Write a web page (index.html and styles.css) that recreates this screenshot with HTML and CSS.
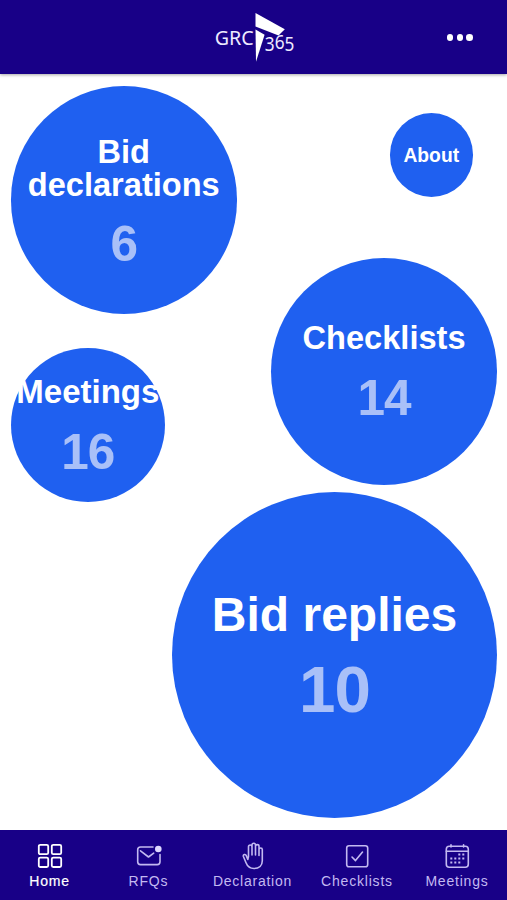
FILE: index.html
```html
<!DOCTYPE html>
<html lang="en">
<head>
<meta charset="utf-8">
<title>GRC 365</title>
<link rel="stylesheet" href="styles.css">
</head>
<body>
<header class="topbar">
  <svg class="logo" viewBox="0 0 86 56" role="img" aria-label="GRC 365">
    <path class="solid" d="M43.500 5L72.800 21.300L66.500 27.500L43.500 18.500Z"/>
    <path class="solid" d="M43.500 21.500L52.600 26.800L44 53.700Z"/>
    <text class="logo-text" x="2.800" y="37.400" font-size="20.500" textLength="39" lengthAdjust="spacingAndGlyphs">GRC</text>
    <text class="logo-text" x="52.800" y="42.600" dy="0 -1.400 1.400" font-size="19.500" textLength="29.500" lengthAdjust="spacingAndGlyphs">365</text>
  </svg>
  <button class="more" aria-label="More"><i></i><i></i><i></i></button>
</header>
<main class="canvas">
  <a class="bubble declarations"><span class="name">Bid<br>declarations</span><span class="count">6</span></a>
  <a class="bubble about"><span class="name">About</span></a>
  <a class="bubble checklists"><span class="name">Checklists</span><span class="count">14</span></a>
  <a class="bubble meetings"><span class="name">Meetings</span><span class="count">16</span></a>
  <a class="bubble replies"><span class="name">Bid replies</span><span class="count">10</span></a>
</main>
<nav class="tabs">
  <a class="tab active">
    <svg class="icon" viewBox="0 0 28 28"><rect x="2.800" y="2.800" width="9.400" height="9.400" rx="1.500"/><rect x="15.800" y="2.800" width="9.400" height="9.400" rx="1.500"/><rect x="2.800" y="15.600" width="9.400" height="9.400" rx="1.500"/><rect x="15.800" y="15.600" width="9.400" height="9.400" rx="1.500"/></svg>
    <span>Home</span>
  </a>
  <a class="tab">
    <svg class="icon" viewBox="0 0 28 28"><path d="M18 5H5.500Q2.700 5 2.700 7.800V19.800Q2.700 22.600 5.500 22.600H22.200Q25 22.600 25 19.800V12.500M5.500 8.800L13.500 15L18.700 11.200"/><circle class="solid" cx="23.300" cy="7" r="3.300"/></svg>
    <span>RFQs</span>
  </a>
  <a class="tab wide">
    <svg class="icon" viewBox="0 0 28 28"><path d="M8.800 17.500L7.300 13.600C6.500 11.700 3.800 12.500 4.400 14.500L6.900 20.500C8.500 24.700 11 26.500 15 26.500C20.200 26.500 23.300 23.500 23.300 18.800V7.600C23.300 5.400 20 5.400 20 7.600V13.500M20 8V4.300C20 2.100 16.500 2.100 16.500 4.300V13M16.500 5V3C16.500 .7 13 .7 13 3V13M13 4.800C13 2.300 9.500 2.300 9.500 4.800V14.500L8.800 17.500"/></svg>
    <span>Declaration</span>
  </a>
  <a class="tab">
    <svg class="icon" viewBox="0 0 28 28"><rect x="3.700" y="3.700" width="21" height="21" rx="2.300"/><path d="M9 15L12.500 18.600L19.500 10"/></svg>
    <span>Checklists</span>
  </a>
  <a class="tab">
    <svg class="icon" viewBox="0 0 28 28"><rect x="3.300" y="4.200" width="22" height="21" rx="3"/><path d="M3.300 9.300H25.300M8 2.800V5M20.600 2.800V5"/><path class="dots" d="M15.300 12.500h2M19.300 12.500h2M7.300 16.500h2M11.300 16.500h2M15.300 16.500h2M19.300 16.500h2M7.300 20.500h2M11.300 20.500h2M15.300 20.500h2"/></svg>
    <span>Meetings</span>
  </a>
</nav>
</body>
</html>
```
FILE: styles.css
```css
* { box-sizing: border-box; }
body {
  margin: 0;
  height: 900px;
  display: flex;
  flex-direction: column;
  overflow: hidden;
  background: #fff;
  font-family: "Liberation Sans", Arial, sans-serif;
}
.topbar {
  height: 74px;
  display: grid;
  grid-template-columns: 1fr 86px 1fr;
  align-items: start;
  padding-top: 8px;
  padding-left: 2px;
  background: #180087;
  box-shadow: 0 1px 3px rgba(0, 0, 0, .35);
}
.logo { grid-column: 2; width: 86px; height: 56px; }
.logo-text { font-family: "Noto Sans", sans-serif; fill: #eeeaff; }
.solid { fill: #fff; }
.more {
  justify-self: end;
  display: flex;
  gap: 3.200px;
  margin: 26px 34px 0 0;
  padding: 0;
  border: 0;
  background: none;
}
.more i { width: 6.600px; height: 6.600px; border-radius: 50%; background: #fff; }

.canvas { position: relative; flex: 1; }
.bubble {
  position: absolute;
  display: flex;
  flex-direction: column;
  align-items: center;
  border-radius: 50%;
  background: #1f60f0;
  color: #fff;
  font-weight: 700;
  font-size: 32.600px;
  line-height: 33px;
  text-align: center;
  white-space: nowrap;
}
.count { color: #a9c0f8; font-size: 49.500px; line-height: 50px; letter-spacing: -1px; }
.declarations { left: 10.500px; top: 12px; width: 226.500px; height: 227.500px; padding-top: 49px; }
.declarations .count { margin-top: 18px; }
.about { left: 389.500px; top: 39px; width: 83.500px; height: 83.500px; justify-content: center; padding-top: 2px; font-size: 19.300px; }
.checklists { left: 270.800px; top: 183.500px; width: 226.500px; height: 227.500px; padding-top: 63.500px; }
.checklists .count { margin-top: 19px; }
.meetings { left: 10.700px; top: 273.500px; width: 154.300px; height: 154.300px; padding-top: 27px; font-size: 33px; }
.meetings .count { margin-top: 19px; }
.replies { left: 171.800px; top: 417.700px; width: 325.500px; height: 326.500px; padding-top: 98px; font-size: 48px; line-height: 50px; }
.replies .count { margin-top: 17px; font-size: 65.500px; line-height: 66px; }

.tabs {
  height: 70px;
  display: grid;
  grid-template-columns: 99px 99px 109px 100px 100px;
  padding-top: 12px;
  background: #180087;
}
.tab {
  display: flex;
  flex-direction: column;
  align-items: center;
  color: #c3b9f1;
  font-size: 14px;
  line-height: 18px;
  letter-spacing: .800px;
}
.tab span { margin-top: 1.500px; }
.wide { letter-spacing: .750px; }
.active { color: #fff; -webkit-text-stroke: .2px #fff; }
.icon { width: 28px; height: 28px; fill: none; stroke: currentColor; stroke-width: 1.600; stroke-linejoin: round; stroke-linecap: round; }
.active .icon { stroke-width: 1.800; }
.icon .solid { fill: #ded8ff; stroke: none; }
.icon .dots { stroke-width: 2; stroke-linecap: butt; }
```
